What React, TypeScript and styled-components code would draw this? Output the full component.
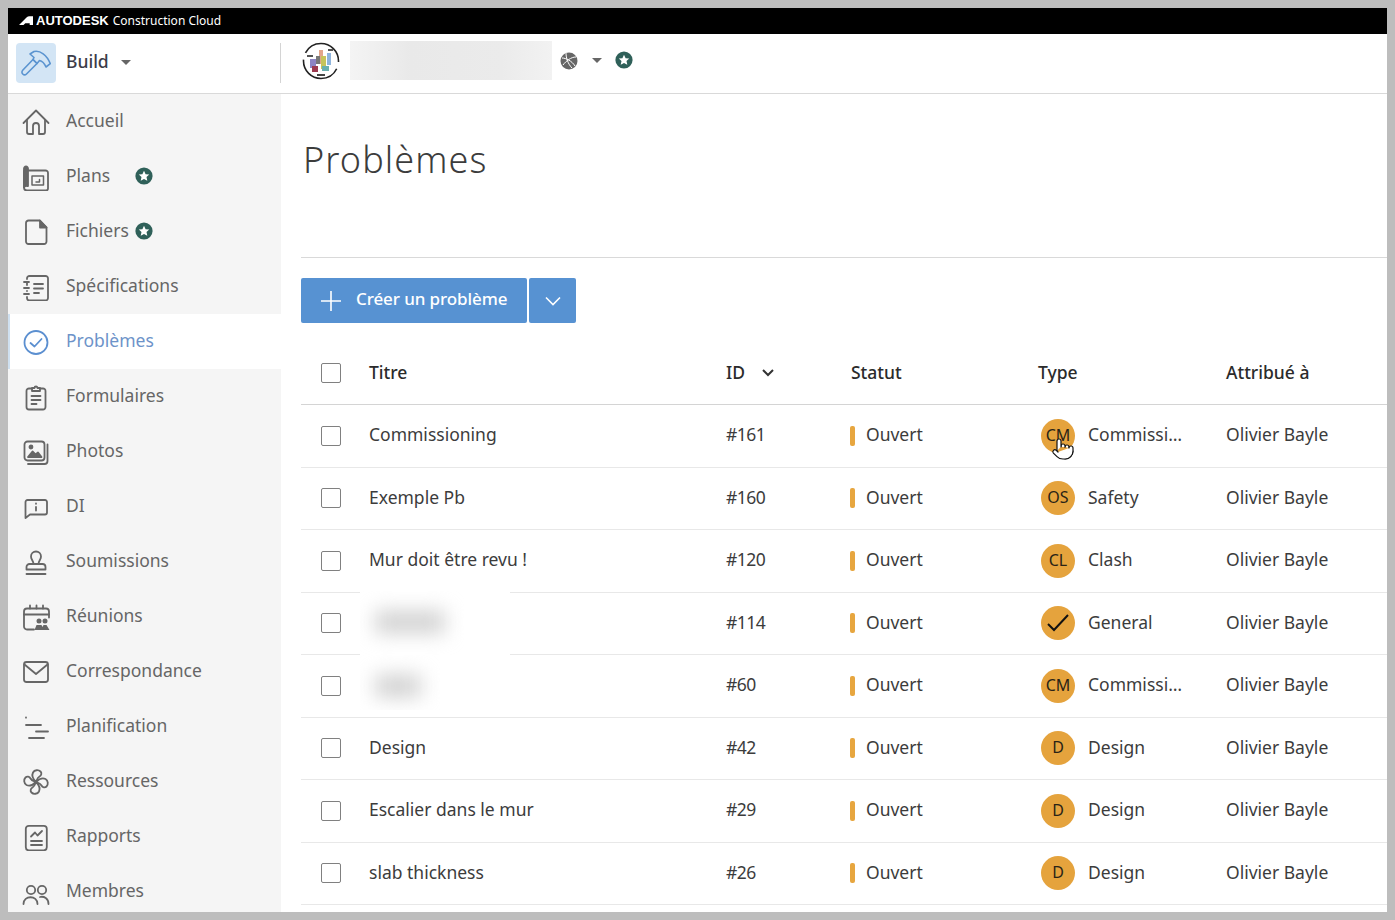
import React from 'react';
import styled, { createGlobalStyle } from 'styled-components';
import { Pointer } from 'lucide-react';

const GlobalStyle = createGlobalStyle`
    html, body {
        margin: 0;
        padding: 0;
        background: #bdbdbd;
        font-family: 'Noto Sans', 'Liberation Sans', sans-serif;
    }
`;

const Frame = styled.div`
    width: 1379px;
    height: 904px;
    margin: 8px;
    background: #fff;
    display: flex;
    flex-direction: column;
    overflow: hidden;
`;

const BrandBar = styled.div`
    height: 26px;
    flex: none;
    box-sizing: border-box;
    padding: 0 0 2px 11px;
    background: #000;
    color: #fff;
    display: flex;
    align-items: center;
    font-size: 12px;
`;

const BrandName = styled.span`
    font-family: 'Liberation Sans', sans-serif;
    font-weight: 700;
    font-size: 13px;
    margin: 0 4px 0 3px;
`;

const ProductBar = styled.div`
    height: 60px;
    flex: none;
    display: flex;
    align-items: center;
    border-bottom: 1px solid #d9d9d9;
    box-sizing: border-box;
`;

const ProductSwitch = styled.div`
    width: 273px;
    height: 40px;
    margin-bottom: 2px;
    box-sizing: border-box;
    border-right: 1px solid #d4d4d4;
    padding-left: 8px;
    display: flex;
    align-items: center;
`;

const ProductTile = styled.div`
    width: 40px;
    height: 40px;
    border-radius: 4px;
    background: #d3e5f5;
    display: flex;
    align-items: center;
    justify-content: center;
`;

const ProductName = styled.span`
    margin-left: 10px;
    padding-bottom: 4px;
    font-size: 17.5px;
    font-weight: 500;
    color: #3c3c48;
`;

const Caret = styled.span`
    width: 0;
    height: 0;
    border-left: 5.5px solid transparent;
    border-right: 5.5px solid transparent;
    border-top: 5px solid #666;
`;

const ProductCaret = styled(Caret)`
    margin-left: 12px;
`;

const ProjectPicker = styled.div`
    display: flex;
    align-items: center;
    padding-left: 21px;
    margin-bottom: 6px;
`;

const ProjectLogo = styled.svg`
    width: 38px;
    height: 38px;
    filter: blur(0.4px);
`;

const BlurredProject = styled.div`
    width: 202px;
    height: 39px;
    margin: 0 8px 0 10px;
    background: linear-gradient(90deg, #f4f4f4, #e9e9e9 30%, #ebebeb 75%, #f2f2f2);
`;

const ProjectCaret = styled(Caret)`
    margin: 0 13px 0 14px;
`;

const Body = styled.div`
    flex: 1;
    min-height: 0;
    display: flex;
`;

const Sidebar = styled.nav`
    width: 273px;
    flex: none;
    background: #f5f5f5;
`;

const NavRow = styled.div<{ $active?: boolean }>`
    height: 55px;
    box-sizing: border-box;
    padding-left: 14px;
    display: flex;
    align-items: center;
    gap: 16px;
    font-size: 17.5px;
    color: ${(props) => (props.$active ? '#6d93c9' : '#666')};
    background: ${(props) => (props.$active ? '#fff' : 'transparent')};
    box-shadow: ${(props) => (props.$active ? 'inset 2px 0 0 #cfe0f0' : 'none')};
`;

const NavIcon = styled.div`
    width: 28px;
    height: 28px;
    flex: none;
`;

const NavLabel = styled.span`
    min-width: 65px;
    padding-bottom: 4px;
`;

const StarBadge = styled.svg`
    width: 18px;
    height: 18px;
    flex: none;
    margin-bottom: 2px;
`;

const NavStar = styled(StarBadge)`
    margin-left: -12px;
`;

const Main = styled.main`
    flex: 1;
    min-width: 0;
    padding-left: 20px;
`;

const PageTitle = styled.h1`
    margin: 0;
    height: 164px;
    box-sizing: border-box;
    padding: 41px 0 0 2px;
    font-size: 36px;
    letter-spacing: 1.1px;
    line-height: 50px;
    font-weight: 300;
    color: #3c3c3c;
    border-bottom: 1px solid #d9d9d9;
`;

const Toolbar = styled.div`
    display: flex;
    gap: 2px;
    padding-top: 20px;
    height: 45px;
`;

const CreateButton = styled.button`
    width: 226px;
    height: 45px;
    border: 0;
    border-radius: 2px;
    background: #5792d2;
    color: #fff;
    font: 500 17px 'Noto Sans', sans-serif;
    letter-spacing: -0.1px;
    display: flex;
    align-items: center;
    gap: 14px;
    padding: 0 0 0 19px;
`;

const ButtonLabel = styled.span`
    padding-bottom: 4px;
`;

const MenuButton = styled.button`
    width: 47px;
    height: 45px;
    border: 0;
    border-radius: 2px;
    background: #5792d2;
    display: flex;
    align-items: center;
    justify-content: center;
    padding: 0;
`;

const Table = styled.div`
    margin-top: 18px;
`;

const Row = styled.div<{ $header?: boolean }>`
    position: relative;
    display: grid;
    grid-template-columns: 68px 357px 125px 187px 188px 1fr;
    align-items: center;
    height: ${(props) => (props.$header ? '64px' : '62.5px')};
    box-sizing: border-box;
    border-bottom: 1px solid ${(props) => (props.$header ? '#d4d4d4' : '#e8e8e8')};
    font-size: 17.5px;
    color: ${(props) => (props.$header ? '#2b2b2b' : '#3c3c3c')};
    font-weight: ${(props) => (props.$header ? 500 : 400)};
`;

const CheckCell = styled.div`
    padding-left: 20px;
    display: flex;
`;

const Checkbox = styled.span`
    width: 18px;
    height: 18px;
    border: 1px solid #808080;
    border-radius: 2px;
    background: #fff;
`;

const Cell = styled.div`
    display: flex;
    align-items: center;
    white-space: nowrap;
`;

const CellText = styled.span<{ $tight?: boolean }>`
    padding-bottom: 3px;
    letter-spacing: ${(props) => (props.$tight ? '-0.5px' : 'normal')};
`;

const HeadText = styled.span`
    padding-bottom: 1px;
`;

const SortChevron = styled.svg`
    width: 14px;
    height: 10px;
    margin-left: 16px;
`;

const StatusBar = styled.span`
    width: 5px;
    height: 20px;
    border-radius: 2px;
    background: #e7a63f;
    margin-right: 11px;
    margin-left: -1px;
`;

const TypeCell = styled(Cell)`
    padding-left: 3px;
    gap: 13px;
`;

const TypeBadge = styled.span`
    position: relative;
    width: 34px;
    height: 34px;
    border-radius: 50%;
    background: #e5a33d;
    color: #2a2316;
    font-size: 16px;
    display: flex;
    align-items: center;
    justify-content: center;
`;

const BadgeLabel = styled.span`
    padding-bottom: 2px;
`;

const HandCursor = styled.span`
    position: absolute;
    left: 10px;
    top: 18px;
    line-height: 0;
`;

const BlurredTitle = styled.div<{ $small?: boolean }>`
    position: absolute;
    left: 59px;
    top: ${(props) => (props.$small ? '0' : '-2px')};
    width: ${(props) => (props.$small ? '90px' : '150px')};
    height: ${(props) => (props.$small ? '55px' : '65px')};
    background: #fff;
    z-index: 1;
    overflow: hidden;
`;

const BlurBlob = styled.div<{ $small?: boolean }>`
    position: absolute;
    left: 15px;
    top: 20px;
    height: 22px;
    width: ${(props) => (props.$small ? '46px' : '70px')};
    background: #d0d0d0;
    filter: blur(10px);
`;

const Star = () => (
    <>
        <circle cx="9" cy="9" r="8.6" fill="#2f6059" />
        <path
            d="M9 3.8l1.6 3.4 3.6.4-2.7 2.5.8 3.6L9 11.9l-3.3 1.8.8-3.6-2.7-2.5 3.6-.4z"
            fill="#fff"
        />
    </>
);

const StarIcon = () => (
    <StarBadge viewBox="0 0 18 18">
        <Star />
    </StarBadge>
);

const NavStarIcon = () => (
    <NavStar viewBox="0 0 18 18">
        <Star />
    </NavStar>
);

const line = {
    fill: 'none',
    stroke: '#666',
    strokeWidth: 1.8,
    strokeLinecap: 'round' as const,
    strokeLinejoin: 'round' as const,
};

const Svg: React.FC<{ children: React.ReactNode }> = ({ children }) => (
    <svg width="28" height="28" viewBox="0 0 28 28" {...line}>
        {children}
    </svg>
);

const fanBlade = 'M14 14C11 11 9.500 7.500 11 4.500c1.500-2.700 5.500-3 7.500-1 1.500 1.500 1 4-1 5-2 1-2.500 3-3.500 5.500z';

const icons: Record<string, React.ReactNode> = {
    home: (
        <Svg>
            <path d="M1.500 15L14 2.500 26.500 15" />
            <path d="M5 12.500V24a2 2 0 0 0 2 2h4V18a3 3 0 0 1 6 0v8h4a2 2 0 0 0 2-2V12.500" />
        </Svg>
    ),
    plans: (
        <Svg>
            <path d="M2 8v16.500a3 3 0 0 0 3 3h19a2 2 0 0 0 2-2V10a2.500 2.500 0 0 0-2.500-2.500H6" />
            <path d="M2 7V5.500a2 2 0 0 1 4 0V23H5a3 3 0 0 0-3 1.500z" fill="#666" />
            <path d="M10 13h11.500v9H10z" strokeWidth="1.500" />
            <path d="M14 19h3.500v-2.500" strokeWidth="1.500" />
        </Svg>
    ),
    files: (
        <Svg>
            <path d="M6.500 2.500h11l7 7v14a2.500 2.500 0 0 1-2.500 2.500H6.500A2.500 2.500 0 0 1 4 23.500v-18.500a2.500 2.500 0 0 1 2.500-2.500z" />
            <path d="M18 2.500l6.500 7H18z" fill="#666" />
        </Svg>
    ),
    specs: (
        <Svg>
            <path d="M5 6V5.500A2.500 2.500 0 0 1 7.500 3h16A2.500 2.500 0 0 1 26 5.500V25a2.500 2.500 0 0 1-2.500 2.500h-16A2.500 2.500 0 0 1 5 25v-1" />
            <path d="M2 9h5M5 9v3M2 15h5M5 18v0M2 21h5" />
            <path d="M12 11h9M12 15.500h9M12 20h5" />
        </Svg>
    ),
    issues: (
        <svg width="28" height="28" viewBox="0 0 28 28" {...line} stroke="#5b8fd0">
            <circle cx="14" cy="14.500" r="11.500" />
            <path d="M8.500 15l4 3.500 7-7.500" />
        </svg>
    ),
    forms: (
        <Svg>
            <path d="M10 5.500H7a2.500 2.500 0 0 0-2.500 2.500v16A2.500 2.500 0 0 0 7 26.500h14a2.500 2.500 0 0 0 2.500-2.500V8A2.500 2.500 0 0 0 21 5.500h-3" />
            <path d="M10 8V5h2.500a1.500 1.500 0 0 1 3 0H18v3z" />
            <path d="M9.500 13h9M9.500 17h9M9.500 21h5" />
        </Svg>
    ),
    photos: (
        <Svg>
            <rect x="2.500" y="3.500" width="20" height="19" rx="3" />
            <path d="M25.500 6.500V23a3 3 0 0 1-3 3H6" />
            <path d="M6 19l4.500-5.500 3 3 2.500-2 3.500 4.500z" fill="#666" />
            <circle cx="9" cy="9" r="1.500" fill="#666" />
        </Svg>
    ),
    di: (
        <Svg>
            <path d="M3.500 25l4.500-3.500h15a2 2 0 0 0 2-2V9a2 2 0 0 0-2-2H5.500a2 2 0 0 0-2 2z" />
            <path d="M14 10.500v.3M14 14v3.500" />
        </Svg>
    ),
    stamp: (
        <Svg>
            <path d="M11.500 16c0-3-2.500-4.500-2.500-7.500a5 5 0 0 1 10 0c0 3-2.500 4.500-2.500 7.500" />
            <path d="M4.500 21.500V19a3 3 0 0 1 3-3h13a3 3 0 0 1 3 3v2.500z" />
            <path d="M4.500 26h19" />
        </Svg>
    ),
    meetings: (
        <Svg>
            <path d="M12 26.500H5a3 3 0 0 1-3-3V8.500a3 3 0 0 1 3-3h19a3 3 0 0 1 3 3v6" />
            <path d="M2 11.500h25M8 2.500v3M14.500 2.500v3M21 2.500v3" />
            <circle cx="17" cy="18" r="2.500" fill="#666" stroke="none" />
            <circle cx="23" cy="18" r="2.500" fill="#666" stroke="none" />
            <path d="M12.500 27l2-5h5l1 2 1-2h3l3 5z" fill="#666" stroke="none" />
        </Svg>
    ),
    mail: (
        <Svg>
            <rect x="2" y="4" width="24" height="20" rx="2.500" />
            <path d="M2.500 6.500L14 16 25.500 6.500" />
        </Svg>
    ),
    schedule: (
        <Svg>
            <path d="M4 4.500v.2" />
            <path d="M4 12h15M14 18.500h12M7 25h15" />
        </Svg>
    ),
    fan: (
        <Svg>
            <path d={fanBlade} />
            <path d={fanBlade} transform="rotate(90 14 14)" />
            <path d={fanBlade} transform="rotate(180 14 14)" />
            <path d={fanBlade} transform="rotate(270 14 14)" />
        </Svg>
    ),
    reports: (
        <Svg>
            <rect x="3.800" y="2.800" width="21" height="24.500" rx="3" />
            <path d="M9 13.500l4-4 2.500 3L20 8" />
            <path d="M9 18h11M9 22h11" />
        </Svg>
    ),
    members: (
        <Svg>
            <circle cx="9" cy="12" r="4.200" />
            <circle cx="20" cy="12" r="4.200" />
            <path d="M1.500 26c0-9 14-9 14 0" />
            <path d="M18 19c4-1 8.500 1.500 8.500 7" />
        </Svg>
    ),
};

const navItems = [
    { key: 'home', label: 'Accueil' },
    { key: 'plans', label: 'Plans', star: true },
    { key: 'files', label: 'Fichiers', star: true },
    { key: 'specs', label: 'Spécifications' },
    { key: 'issues', label: 'Problèmes', active: true },
    { key: 'forms', label: 'Formulaires' },
    { key: 'photos', label: 'Photos' },
    { key: 'di', label: 'DI' },
    { key: 'stamp', label: 'Soumissions' },
    { key: 'meetings', label: 'Réunions' },
    { key: 'mail', label: 'Correspondance' },
    { key: 'schedule', label: 'Planification' },
    { key: 'fan', label: 'Ressources' },
    { key: 'reports', label: 'Rapports' },
    { key: 'members', label: 'Membres' },
];

interface Issue {
    title?: string;
    blur?: 'large' | 'small';
    id: string;
    badge: string;
    type: string;
    hover?: boolean;
}

const issues: Issue[] = [
    { title: 'Commissioning', id: '#161', badge: 'CM', type: 'Commissi…', hover: true },
    { title: 'Exemple Pb', id: '#160', badge: 'OS', type: 'Safety' },
    { title: 'Mur doit être revu !', id: '#120', badge: 'CL', type: 'Clash' },
    { blur: 'large', id: '#114', badge: 'check', type: 'General' },
    { blur: 'small', id: '#60', badge: 'CM', type: 'Commissi…' },
    { title: 'Design', id: '#42', badge: 'D', type: 'Design' },
    { title: 'Escalier dans le mur', id: '#29', badge: 'D', type: 'Design' },
    { title: 'slab thickness', id: '#26', badge: 'D', type: 'Design' },
];

const App: React.FC = () => (
    <>
        <GlobalStyle />
        <Frame>
            <BrandBar>
                <svg width="14" height="9" viewBox="0 0 14 9">
                    <path d="M0 9L7.500 1.500Q8.800.3 10.500.3H14V9h-3.300V7.300H6.300L4.500 9z" fill="#fff" />
                </svg>
                <BrandName>AUTODESK</BrandName>
                Construction Cloud
            </BrandBar>
            <ProductBar>
                <ProductSwitch>
                    <ProductTile>
                        <svg width="30" height="30" viewBox="0 0 30 30" fill="none" stroke="#5b94d0" strokeWidth="1.6" strokeLinejoin="round">
                            <path d="M1.700 22.300L12 11.500l4 4L5.500 26a2.600 2.600 0 0 1-3.800-3.700z" />
                            <path d="M9 6l4-2.500C19 2 26 7 29.300 15.700L25 19c-1.500-3.500-4-6-6.500-6.500L16 15.500l-4-4 1-2z" />
                        </svg>
                    </ProductTile>
                    <ProductName>Build</ProductName>
                    <ProductCaret />
                </ProductSwitch>
                <ProjectPicker>
                    <ProjectLogo viewBox="0 0 38 38">
                        <circle cx="19" cy="19" r="17.500" fill="none" stroke="#222" strokeWidth="1.6" strokeDasharray="48 7" strokeDashoffset="-8" />
                        <rect x="17" y="8" width="4" height="14" fill="#e2a58c" />
                        <rect x="25" y="11" width="4" height="12" fill="#8fb4dc" />
                        <rect x="8" y="17" width="6" height="9" fill="#8c84c4" />
                        <rect x="10" y="24" width="6" height="6" fill="#9c3a50" />
                        <rect x="19" y="14" width="5" height="13" fill="#c7c45c" />
                        <rect x="14" y="14" width="4" height="8" fill="#777" />
                        <rect x="20" y="24" width="7" height="5" fill="#6bb0b0" />
                        <rect x="15" y="32" width="8" height="2" fill="#444" />
                        <rect x="26" y="7" width="5" height="2" fill="#555" />
                        <rect x="5" y="13" width="6" height="2" fill="#555" />
                    </ProjectLogo>
                    <BlurredProject />
                    <svg width="18" height="18" viewBox="0 0 18 18" fill="none">
                        <circle cx="9" cy="9" r="8.500" fill="#666" />
                        <path d="M2 6c4 0 10 3 13 8M6 1c0 5 2 11 6 15M3 13c3-4 8-8 13-8" stroke="#fff" strokeWidth="1" />
                    </svg>
                    <ProjectCaret />
                    <StarIcon />
                </ProjectPicker>
            </ProductBar>
            <Body>
                <Sidebar>
                    {navItems.map((item) => (
                        <NavRow key={item.key} $active={item.active}>
                            <NavIcon>{icons[item.key]}</NavIcon>
                            <NavLabel>{item.label}</NavLabel>
                            {item.star ? <NavStarIcon /> : undefined}
                        </NavRow>
                    ))}
                </Sidebar>
                <Main>
                    <PageTitle>Problèmes</PageTitle>
                    <Toolbar>
                        <CreateButton>
                            <svg width="22" height="22" viewBox="0 0 22 22" stroke="#fff" strokeWidth="1.6">
                                <path d="M11 1v20M1 11h20" />
                            </svg>
                            <ButtonLabel>Créer un problème</ButtonLabel>
                        </CreateButton>
                        <MenuButton>
                            <svg width="16" height="10" viewBox="0 0 16 10" fill="none" stroke="#fff" strokeWidth="1.6">
                                <path d="M1 1.500l7 7 7-7" />
                            </svg>
                        </MenuButton>
                    </Toolbar>
                    <Table>
                        <Row $header>
                            <CheckCell>
                                <Checkbox />
                            </CheckCell>
                            <Cell>
                                <HeadText>Titre</HeadText>
                            </Cell>
                            <Cell>
                                <HeadText>ID</HeadText>
                                <SortChevron viewBox="0 0 14 10" fill="none" stroke="#333" strokeWidth="2">
                                    <path d="M2 2l5 5 5-5" />
                                </SortChevron>
                            </Cell>
                            <Cell>
                                <HeadText>Statut</HeadText>
                            </Cell>
                            <Cell>
                                <HeadText>Type</HeadText>
                            </Cell>
                            <Cell>
                                <HeadText>Attribué à</HeadText>
                            </Cell>
                        </Row>
                        {issues.map((issue) => (
                            <Row key={issue.id}>
                                <CheckCell>
                                    <Checkbox />
                                </CheckCell>
                                <Cell>
                                    <CellText>{issue.title}</CellText>
                                </Cell>
                                <Cell>
                                    <CellText $tight>{issue.id}</CellText>
                                </Cell>
                                <Cell>
                                    <StatusBar />
                                    <CellText>Ouvert</CellText>
                                </Cell>
                                <TypeCell>
                                    <TypeBadge>
                                        {issue.badge === 'check' ? (
                                            <svg width="24" height="20" viewBox="0 0 24 20" fill="none" stroke="#111" strokeWidth="2">
                                                <path d="M2 11l6 6L22 2" />
                                            </svg>
                                        ) : (
                                            <BadgeLabel>{issue.badge}</BadgeLabel>
                                        )}
                                        {issue.hover ? (
                                            <HandCursor>
                                                <Pointer size={24} color="#111" fill="#fff" strokeWidth={1.2} />
                                            </HandCursor>
                                        ) : undefined}
                                    </TypeBadge>
                                    <CellText>{issue.type}</CellText>
                                </TypeCell>
                                <Cell>
                                    <CellText>Olivier Bayle</CellText>
                                </Cell>
                                {issue.blur ? (
                                    <BlurredTitle $small={issue.blur === 'small'}>
                                        <BlurBlob $small={issue.blur === 'small'} />
                                    </BlurredTitle>
                                ) : undefined}
                            </Row>
                        ))}
                    </Table>
                </Main>
            </Body>
        </Frame>
    </>
);

export default App;
